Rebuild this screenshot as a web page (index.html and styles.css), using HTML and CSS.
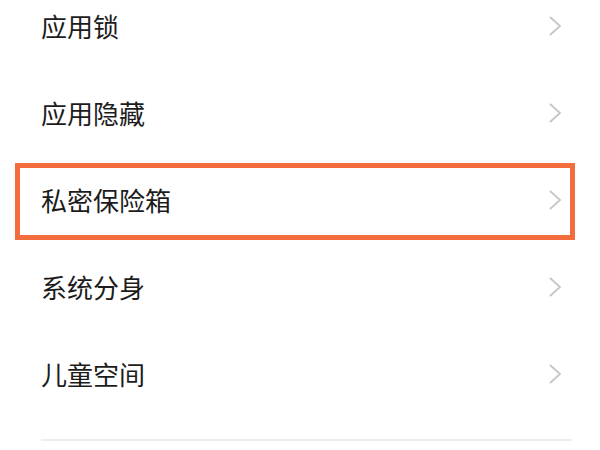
FILE: index.html
```html
<!DOCTYPE html>
<html lang="zh-CN">
<head>
    <meta charset="UTF-8">
    <meta name="viewport" content="width=device-width, initial-scale=1.0">
    <title>隐私设置</title>
    <link rel="stylesheet" href="styles.css">
</head>
<body>
    <div class="menu-list">
        <div class="menu-item">
            <span class="item-name">应用锁</span>
            <svg class="arrow" viewBox="0 0 14 22"><polyline points="2,2 12,11 2,20"/></svg>
        </div>
        <div class="menu-item">
            <span class="item-name">应用隐藏</span>
            <svg class="arrow" viewBox="0 0 14 22"><polyline points="2,2 12,11 2,20"/></svg>
        </div>
        <div class="menu-item highlight">
            <span class="item-name">私密保险箱</span>
            <svg class="arrow" viewBox="0 0 14 22"><polyline points="2,2 12,11 2,20"/></svg>
        </div>
        <div class="menu-item">
            <span class="item-name">系统分身</span>
            <svg class="arrow" viewBox="0 0 14 22"><polyline points="2,2 12,11 2,20"/></svg>
        </div>
        <div class="menu-item">
            <span class="item-name">儿童空间</span>
            <svg class="arrow" viewBox="0 0 14 22"><polyline points="2,2 12,11 2,20"/></svg>
        </div>
    </div>
    <div class="divider"></div>
</body>
</html>
```

FILE: styles.css
```css
body {
    margin: 0;
    background: #ffffff;
    font-family: "Noto Sans CJK SC", "Noto Sans", sans-serif;
    color: #1c1c1c;
    overflow: hidden;
}

.menu-list {
    margin-top: -18px;
}

.menu-item {
    position: relative;
    display: flex;
    align-items: center;
    justify-content: space-between;
    height: 87px;
    padding: 0 38px 0 41px;
}

.item-name {
    font-size: 26px;
    line-height: 1;
}

.arrow {
    width: 14px;
    height: 22px;
    fill: none;
    stroke: #c6c6c6;
    stroke-width: 1.8;
}

/* 高亮框 */
.highlight::after {
    content: "";
    position: absolute;
    top: 7px;
    bottom: 3px;
    left: 15px;
    right: 25px;
    border: 5px solid #f36c3d;
}

.divider {
    height: 2px;
    margin: 22px 28px 0 41px;
    background: #ededed;
}
```
